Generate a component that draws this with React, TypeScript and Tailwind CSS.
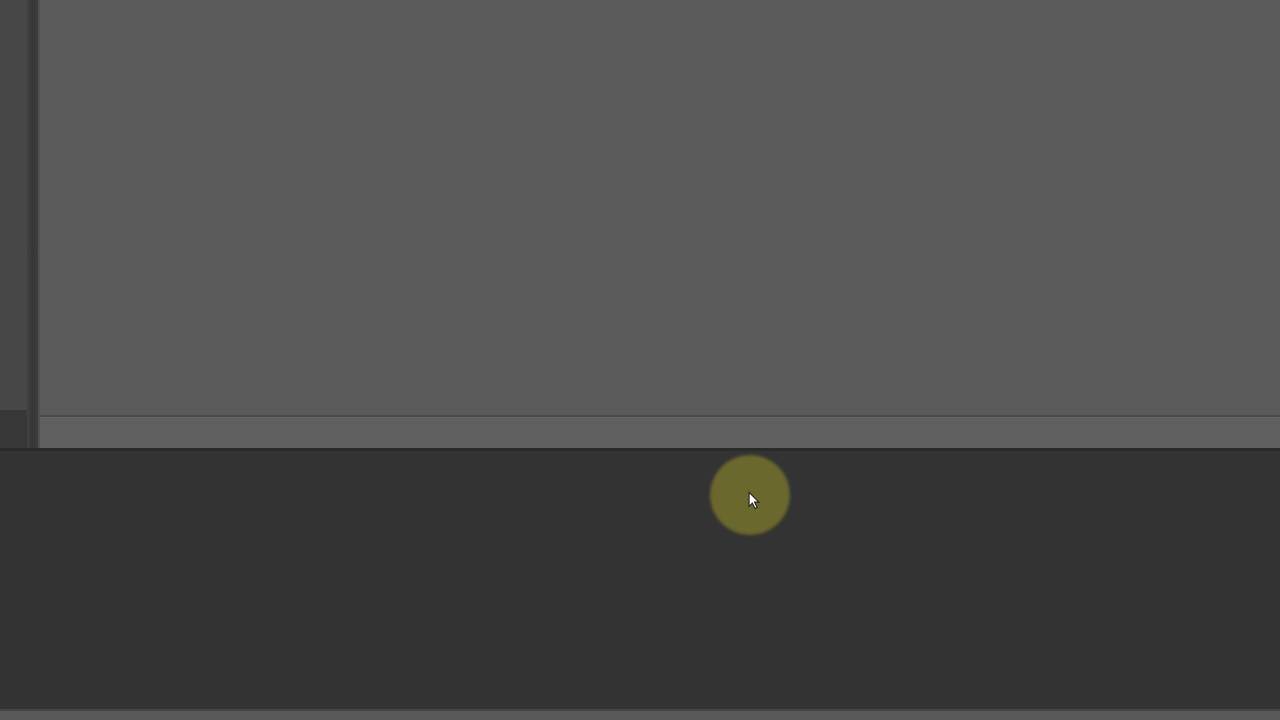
import React from "react";

export default function App() {
  return (
    <div className="relative w-[1280px] h-[720px] overflow-hidden bg-[#333333] flex flex-col font-['Liberation_Sans',sans-serif]">
      <div className="flex h-[448px] shrink-0">
        <div className="w-[27px] flex flex-col">
          <div className="h-[410px] bg-[#474747]" />
          <div className="flex-1 bg-[#373737]" />
        </div>
        <div className="w-[11px] bg-gradient-to-r from-[#424242] via-[#363636] to-[#3c3c3c]" />
        <div className="w-[2px] bg-[#505050]" />
        <div className="flex-1 flex flex-col">
          <div className="h-[415px] bg-[#5a5a5a]" />
          <div className="h-[2px] bg-[#4a4a4a]" />
          <div className="h-[1px] bg-[#666666]" />
          <div className="flex-1 bg-[#5f5f5f]" />
        </div>
      </div>
      <div className="h-[3px] bg-[#2a2a2a] shrink-0" />
      <div className="flex-1 bg-[#333333]" />
      <div className="h-[2px] bg-[#444444] shrink-0" />
      <div className="h-[9px] bg-[#595959] shrink-0" />

      <div className="absolute left-[710px] top-[455px] w-[80px] h-[80px] rounded-full bg-[#6a682c] blur-[1.5px]" />
      <svg
        className="absolute left-[748px] top-[491px]"
        width="13"
        height="20"
        viewBox="0 0 12 18"
      >
        <path d="M1 1 L1 14 L4 11 L6.5 16 L8.5 15 L6 10 L10 10 Z" fill="#ffffff" stroke="#222222" strokeWidth="1" />
      </svg>
    </div>
  );
}
